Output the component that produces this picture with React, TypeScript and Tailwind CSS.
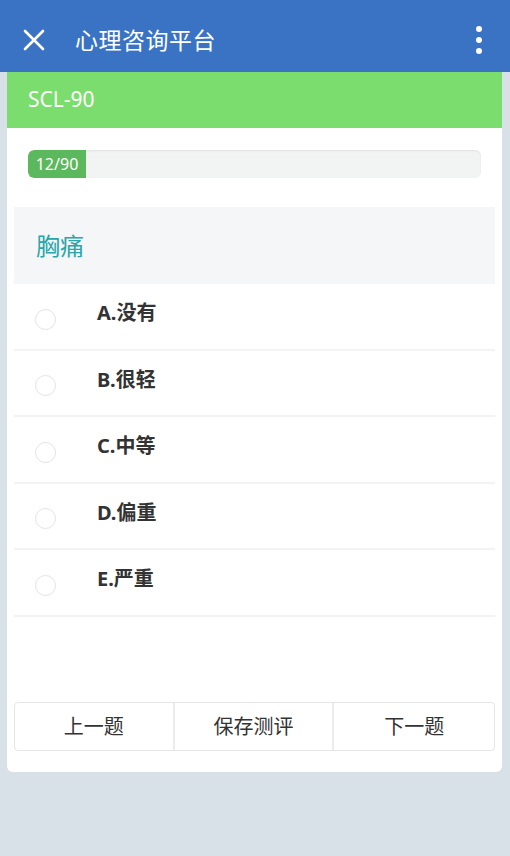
import { useState } from 'react'

const options = ['A.没有', 'B.很轻', 'C.中等', 'D.偏重', 'E.严重']

export default function App() {
  const [selected, setSelected] = useState<number | null>(null)

  return (
    <div
      className="w-[510px] h-[856px] bg-[#d8e0e8] flex flex-col"
      style={{ fontFamily: '"Noto Sans", "Noto Sans CJK SC", sans-serif' }}
    >
      {/* 顶部导航 */}
      <div className="h-[72px] bg-[#3b73c4] flex items-center px-[22px] pt-[8px] shrink-0">
        <svg width="24" height="24" viewBox="0 0 24 24" className="mr-[29px]">
          <path d="M3 3 L21 21 M21 3 L3 21" stroke="white" strokeWidth="2.6" strokeLinecap="round" />
        </svg>
        <span className="text-white text-[23px] tracking-[0.5px]">心理咨询平台</span>
        <div className="ml-auto mr-[6px] flex flex-col gap-[5px]">
          <span className="w-[6px] h-[6px] rounded-full bg-white" />
          <span className="w-[6px] h-[6px] rounded-full bg-white" />
          <span className="w-[6px] h-[6px] rounded-full bg-white" />
        </div>
      </div>

      {/* 卡片 */}
      <div className="mx-[7px] w-[495px] h-[700px] bg-white rounded-b-[6px] flex flex-col">
        <div className="h-[56px] bg-[#7bdd6d] flex items-center px-[21px] shrink-0">
          <span className="text-white text-[21px]">SCL-90</span>
        </div>

        {/* 进度条 */}
        <div className="px-[21px] pt-[22px]">
          <div className="h-[28px] w-[453px] rounded-[6px] bg-[#f2f3f3] shadow-[inset_0_1px_2px_rgba(0,0,0,0.08)] overflow-hidden">
            <div className="h-full w-[58px] bg-[#5cb85c] rounded-l-[6px] flex items-center justify-center text-white text-[16px]">
              12/90
            </div>
          </div>
        </div>

        {/* 题目 */}
        <div className="mx-[7px] mt-[29px] h-[77px] bg-[#f4f6f8] flex items-center px-[22px]">
          <span className="text-[#2aa5a8] text-[24px]">胸痛</span>
        </div>

        {/* 选项 */}
        <div className="mx-[7px]">
          {options.map((o, i) => (
            <div
              key={o}
              onClick={() => setSelected(i)}
              className="h-[66.5px] flex items-center border-b-[2px] border-[#f3f3f3] cursor-pointer"
            >
              <span
                className={`ml-[21px] mt-[6px] w-[21px] h-[21px] rounded-full border-[1.5px] ${
                  selected === i ? 'border-[#5cb85c] bg-[#5cb85c]' : 'border-[#e3e3e3]'
                }`}
              />
              <span className="ml-[41px] mb-[6px] text-[20px] font-bold text-[#333]">{o}</span>
            </div>
          ))}
        </div>

        {/* 按钮 */}
        <div className="mt-auto mb-[21px] mx-[7px] grid grid-cols-3 h-[49px] border border-[#e6e6e6] rounded-[4px] overflow-hidden">
          <button className="border-r-[2px] border-[#ebebeb] text-[20px] text-[#333]">上一题</button>
          <button className="border-r-[2px] border-[#ebebeb] text-[20px] text-[#333]">保存测评</button>
          <button className="text-[20px] text-[#333]">下一题</button>
        </div>
      </div>
    </div>
  )
}
